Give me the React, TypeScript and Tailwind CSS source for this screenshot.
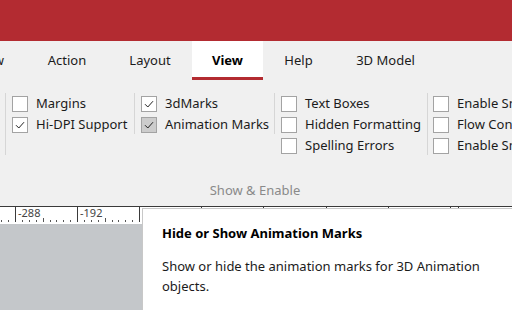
import React from "react";

const FONT = { fontFamily: '"Noto Sans", "Open Sans", sans-serif' };

function Check({ checked, hover }: { checked?: boolean; hover?: boolean }) {
  return (
    <div
      className={`w-[16px] h-[16px] border border-[#a3a3a3] flex items-center justify-center shrink-0 ${
        hover ? "bg-[#cccccc]" : "bg-white"
      }`}
    >
      {checked && (
        <svg width="10" height="8" viewBox="0 0 10 8">
          <path d="M1 4.2 L3.8 7 L9 1.2" fill="none" stroke="#222" strokeWidth="1" />
        </svg>
      )}
    </div>
  );
}

function Row({ label, checked, hover }: { label: string; checked?: boolean; hover?: boolean }) {
  return (
    <div className="h-[21px] flex items-center gap-[8px] whitespace-nowrap">
      <Check checked={checked} hover={hover} />
      <span className="text-[13px] text-[#1b1b1b]">{label}</span>
    </div>
  );
}

function Sep({ h }: { h: string }) {
  return <div className={`w-px bg-[#d6d6d6] shrink-0 ${h}`} />;
}

function Ruler() {
  const majors = [15, 77, 139, 201, 263, 326, 388, 450];
  const minors: number[] = [];
  for (let i = 0; i < 8; i++) {
    for (let k = 1; k < 9; k++) minors.push(majors[0] - 62 + i * 62 + k * 6.9);
  }
  return (
    <svg width="512" height="18" className="block">
      <rect x="0" y="0" width="512" height="18" fill="#ffffff" />
      <line x1="0" y1="0.5" x2="512" y2="0.5" stroke="#3a3a3a" />
      {majors.map((x) => (
        <line key={x} x1={x + 0.5} y1="1" x2={x + 0.5} y2="16" stroke="#3a3a3a" />
      ))}
      <line x1="458.5" y1="1" x2="458.5" y2="4" stroke="#3a3a3a" />
      {minors.map((x, i) => (
        <line
          key={i}
          x1={Math.round(x) + 0.5}
          y1={i % 8 === 3 ? 12 : 14}
          x2={Math.round(x) + 0.5}
          y2="16"
          stroke="#555"
        />
      ))}
      <rect x="17" y="2" width="24" height="10" fill="#fff" />
      <rect x="79" y="2" width="24" height="10" fill="#fff" />
      <text x="18" y="11" fontSize="11" fill="#444" style={FONT}>-288</text>
      <text x="80" y="11" fontSize="11" fill="#444" style={FONT}>-192</text>
    </svg>
  );
}

export default function App() {
  return (
    <div className="w-[512px] h-[310px] overflow-hidden relative bg-[#c4c7ca]" style={FONT}>
      <div className="h-[41px] bg-[#b32b31]" />
      <div className="bg-[#f0f0f0]">
        <div className="flex h-[39px] text-[13px] text-[#1b1b1b]">
          <div className="w-[26px] shrink-0 flex justify-end overflow-hidden pr-[22px] pt-[10px] whitespace-nowrap">
            Review
          </div>
          <div className="w-[82px] shrink-0 text-center pt-[10px]">Action</div>
          <div className="w-[84px] shrink-0 text-center pt-[10px]">Layout</div>
          <div className="w-[71px] shrink-0 flex flex-col">
            <div className="flex-1 bg-white text-center pt-[10px] font-bold text-black">View</div>
            <div className="h-[3px] bg-[#b32b31]" />
          </div>
          <div className="w-[71px] shrink-0 text-center pt-[10px]">Help</div>
          <div className="w-[103px] shrink-0 text-center pt-[10px]">3D Model</div>
        </div>
        <div className="h-[126px] flex flex-col">
          <div className="flex pl-[5px] pt-[13px] h-[96px] overflow-hidden">
            <Sep h="h-[62px]" />
            <div className="w-[128px] shrink-0 pl-[6px]">
              <Row label="Margins" />
              <Row label="Hi-DPI Support" checked />
            </div>
            <Sep h="h-[41px]" />
            <div className="w-[139px] shrink-0 pl-[6px]">
              <Row label="3dMarks" checked />
              <Row label="Animation Marks" checked hover />
            </div>
            <Sep h="h-[41px]" />
            <div className="w-[152px] shrink-0 pl-[6px]">
              <Row label="Text Boxes" />
              <Row label="Hidden Formatting" />
              <Row label="Spelling Errors" />
            </div>
            <Sep h="h-[62px]" />
            <div className="shrink-0 pl-[5px]">
              <Row label="Enable Snapping" />
              <Row label="Flow Connectors" />
              <Row label="Enable Smart Guides" />
            </div>
          </div>
          <div className="w-[510px] text-center text-[13px] text-[#8a8a8a] pt-[5px]">Show &amp; Enable</div>
        </div>
      </div>
      <Ruler />
      <div className="absolute left-[142px] top-[208px] w-[400px] h-[120px] bg-white border border-[#c8c8c8] pl-[19px] pt-[15px] text-[13px] text-[#1b1b1b]">
        <div className="font-bold h-[22px] text-black">Hide or Show Animation Marks</div>
        <div className="mt-[10px] leading-[20px]">
          <div>Show or hide the animation marks for 3D Animation</div>
          <div>objects.</div>
        </div>
      </div>
    </div>
  );
}
